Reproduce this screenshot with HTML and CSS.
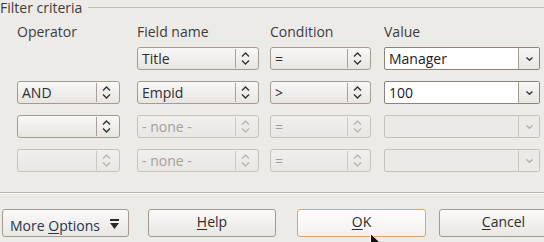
FILE: index.html
```html
<!DOCTYPE html>
<html>
<head>
<meta charset="utf-8">
<link rel="stylesheet" href="styles.css">
</head>
<body>
<div class="dialog">
  <div class="legend"><span class="legend-text">Filter criteria</span><span class="legend-line"></span></div>
  <div class="grid head">
    <div class="hdr">Operator</div>
    <div class="hdr">Field name</div>
    <div class="hdr">Condition</div>
    <div class="hdr">Value</div>
  </div>
  <div class="grid rows">
    <div class="cell"></div>
    <div class="cell"><div class="combo w-field"><span class="txt">Title</span><span class="spin"><svg width="9" height="15" viewBox="0 0 9 15"><polyline points="1,5.5 4.5,2 8,5.5"/><polyline points="1,9.5 4.5,13 8,9.5"/></svg></span></div></div>
    <div class="cell"><div class="combo w-cond"><span class="txt">=</span><span class="spin"><svg width="9" height="15" viewBox="0 0 9 15"><polyline points="1,5.5 4.5,2 8,5.5"/><polyline points="1,9.5 4.5,13 8,9.5"/></svg></span></div></div>
    <div class="cell"><div class="entry"><span class="txt">Manager</span><span class="drop"><svg width="7" height="4" viewBox="0 0 7 4"><polyline points="0.5,0.5 3.5,3.2 6.5,0.5"/></svg></span></div></div>

    <div class="cell"><div class="combo w-op"><span class="txt">AND</span><span class="spin"><svg width="9" height="15" viewBox="0 0 9 15"><polyline points="1,5.5 4.5,2 8,5.5"/><polyline points="1,9.5 4.5,13 8,9.5"/></svg></span></div></div>
    <div class="cell"><div class="combo w-field"><span class="txt">Empid</span><span class="spin"><svg width="9" height="15" viewBox="0 0 9 15"><polyline points="1,5.5 4.5,2 8,5.5"/><polyline points="1,9.5 4.5,13 8,9.5"/></svg></span></div></div>
    <div class="cell"><div class="combo w-cond"><span class="txt">&gt;</span><span class="spin"><svg width="9" height="15" viewBox="0 0 9 15"><polyline points="1,5.5 4.5,2 8,5.5"/><polyline points="1,9.5 4.5,13 8,9.5"/></svg></span></div></div>
    <div class="cell"><div class="entry"><span class="txt">100</span><span class="drop"><svg width="7" height="4" viewBox="0 0 7 4"><polyline points="0.5,0.5 3.5,3.2 6.5,0.5"/></svg></span></div></div>

    <div class="cell"><div class="combo w-op"><span class="txt"></span><span class="spin"><svg width="9" height="15" viewBox="0 0 9 15"><polyline points="1,5.5 4.5,2 8,5.5"/><polyline points="1,9.5 4.5,13 8,9.5"/></svg></span></div></div>
    <div class="cell"><div class="combo w-field disabled"><span class="txt">- none -</span><span class="spin"><svg width="9" height="15" viewBox="0 0 9 15"><polyline points="1,5.5 4.5,2 8,5.5"/><polyline points="1,9.5 4.5,13 8,9.5"/></svg></span></div></div>
    <div class="cell"><div class="combo w-cond disabled"><span class="txt">=</span><span class="spin"><svg width="9" height="15" viewBox="0 0 9 15"><polyline points="1,5.5 4.5,2 8,5.5"/><polyline points="1,9.5 4.5,13 8,9.5"/></svg></span></div></div>
    <div class="cell"><div class="entry disabled"><span class="txt"></span><span class="drop"><svg width="7" height="4" viewBox="0 0 7 4"><polyline points="0.5,0.5 3.5,3.2 6.5,0.5"/></svg></span></div></div>

    <div class="cell"><div class="combo w-op disabled"><span class="txt"></span><span class="spin"><svg width="9" height="15" viewBox="0 0 9 15"><polyline points="1,5.5 4.5,2 8,5.5"/><polyline points="1,9.5 4.5,13 8,9.5"/></svg></span></div></div>
    <div class="cell"><div class="combo w-field disabled"><span class="txt">- none -</span><span class="spin"><svg width="9" height="15" viewBox="0 0 9 15"><polyline points="1,5.5 4.5,2 8,5.5"/><polyline points="1,9.5 4.5,13 8,9.5"/></svg></span></div></div>
    <div class="cell"><div class="combo w-cond disabled"><span class="txt">=</span><span class="spin"><svg width="9" height="15" viewBox="0 0 9 15"><polyline points="1,5.5 4.5,2 8,5.5"/><polyline points="1,9.5 4.5,13 8,9.5"/></svg></span></div></div>
    <div class="cell"><div class="entry disabled"><span class="txt"></span><span class="drop"><svg width="7" height="4" viewBox="0 0 7 4"><polyline points="0.5,0.5 3.5,3.2 6.5,0.5"/></svg></span></div></div>
  </div>
  <div class="sep"></div>
  <div class="buttons">
    <div class="btn btn-more"><span class="more-label">More <u>O</u>ptions</span><svg class="more-icon" width="9" height="11" viewBox="0 0 9 11"><rect x="0" y="0" width="9" height="2"/><polygon points="0,4 9,4 4.5,10"/></svg></div>
    <div class="btn btn-help"><span><u>H</u>elp</span></div>
    <div class="btn btn-ok"><span><u>O</u>K</span></div>
    <div class="btn btn-cancel"><span><u>C</u>ancel</span></div>
  </div>
  <svg class="cursor" width="12" height="18" viewBox="0 0 12 18"><polygon points="0.5,0.5 0.5,14 4,10.5 6.5,16.5 8.5,15.5 6,9.8 10.5,9.8" fill="#111" stroke="#fff" stroke-width="1"/></svg>
</div>
</body>
</html>
```
FILE: styles.css
```css
html, body {
  margin: 0;
  padding: 0;
  background: #edebe8;
}
body {
  font-family: "Open Sans", "DejaVu Sans", sans-serif;
  font-size: 14px;
  color: #3c3c3c;
}
.dialog {
  position: relative;
  width: 544px;
  height: 242px;
  overflow: hidden;
}
.legend {
  display: flex;
  align-items: center;
  height: 16px;
}
.legend-text {
  line-height: 16px;
  padding-right: 6px;
}
.legend-line {
  flex: 1;
  height: 1px;
  background: #c4bfb9;
  margin-top: -1px;
}
.grid {
  display: grid;
  grid-template-columns: 120px 133px 114px 156px;
  padding-left: 17px;
}
.head {
  margin-top: 7px;
  height: 18px;
}
.hdr {
  line-height: 18px;
}
.rows {
  grid-template-rows: repeat(4, 23px);
  row-gap: 11px;
  margin-top: 6px;
}
.cell {
  display: flex;
}
.combo {
  box-sizing: border-box;
  height: 23px;
  border: 1px solid #a49b91;
  border-radius: 3px;
  background: linear-gradient(#f9f8f7, #e8e5e1);
  display: flex;
  align-items: center;
  color: #2e2e2e;
}
.w-op { width: 103px; }
.w-field { width: 122px; }
.w-cond { width: 101px; }
.txt {
  flex: 1;
  padding-left: 4px;
  line-height: 21px;
  white-space: nowrap;
}
.spin {
  display: flex;
  align-items: center;
  height: 19px;
  border-left: 1px solid #aaa29a;
  padding: 0 8px 0 5px;
}
.spin svg polyline {
  fill: none;
  stroke: #333;
  stroke-width: 1.4;
}
.combo.disabled {
  border-color: #c8c2bb;
  background: linear-gradient(#f1efed, #e9e6e3);
  color: #a5a09a;
}
.combo.disabled .spin { border-left-color: #cdc7c1; }
.combo.disabled .spin svg polyline { stroke: #b4aea8; stroke-width: 1.2; }
.entry {
  box-sizing: border-box;
  width: 156px;
  height: 23px;
  border: 1px solid #8c847b;
  border-radius: 2px;
  background: #fff;
  display: flex;
  align-items: stretch;
  color: #202020;
}
.entry .txt { padding-left: 4px; }
.drop {
  width: 20px;
  border-left: 1px solid #a39a90;
  background: linear-gradient(#f7f6f4, #e9e6e2);
  display: flex;
  align-items: center;
  justify-content: center;
}
.drop svg polyline {
  fill: none;
  stroke: #333;
  stroke-width: 1.4;
}
.entry.disabled {
  border-color: #c8c2bb;
  background: #eceae7;
}
.entry.disabled .drop {
  border-left-color: #cdc7c1;
  background: #eceae7;
}
.entry.disabled .drop svg polyline { stroke: #b4aea8; }
.sep {
  height: 1px;
  background: #b8b2ab;
  border-bottom: 1px solid #f8f7f6;
  margin-top: 20px;
}
.buttons {
  display: grid;
  grid-template-columns: 146px 149px 142px auto;
  padding-left: 2px;
  margin-top: 15px;
}
.btn {
  box-sizing: border-box;
  height: 28px;
  width: 128px;
  border: 1px solid #a39b92;
  border-radius: 3px;
  background: linear-gradient(#fbfaf9, #e9e6e2);
  display: flex;
  align-items: center;
  justify-content: center;
  color: #2c2c2c;
  line-height: 18px;
  padding-bottom: 2px;
}
.btn u { text-decoration-thickness: 1px; text-underline-offset: 2px; }
.btn-more {
  width: 127px;
  justify-content: flex-start;
  padding: 5px 0 0 7px;
}
.more-label { color: #23354f; }
.more-icon { margin-left: 10px; fill: #2a2a2a; margin-top: -2px; }
.btn-ok {
  width: 129px;
  border-color: #e0a462;
  background: linear-gradient(#ffffff, #f3f1ef);
}
.btn-cancel { width: 129px; }
.cursor {
  position: absolute;
  left: 370px;
  top: 233px;
}
```
